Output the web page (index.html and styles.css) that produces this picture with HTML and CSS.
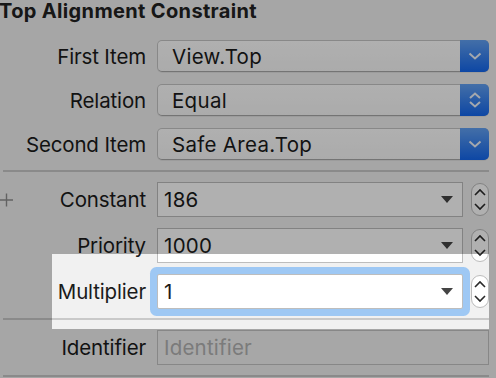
FILE: index.html
```html
<!DOCTYPE html>
<html>
<head>
<meta charset="utf-8">
<link rel="stylesheet" href="styles.css">
</head>
<body>
<div class="panel">
  <div class="title">Top Alignment Constraint</div>

  <div class="grid popups">
    <div class="label">First Item</div>
    <div class="popup">
      <div class="popup-value">View.Top</div>
      <div class="popup-btn">
        <svg width="14" height="8" viewBox="0 0 14 8"><path d="M1.5 1.5 L7 6.5 L12.5 1.5" fill="none" stroke="#eef3fb" stroke-width="2"/></svg>
      </div>
    </div>

    <div class="label">Relation</div>
    <div class="popup">
      <div class="popup-value">Equal</div>
      <div class="popup-btn">
        <svg width="14" height="18" viewBox="0 0 14 18"><path d="M2 7 L7 2.5 L12 7 M2 11 L7 15.5 L12 11" fill="none" stroke="#eef3fb" stroke-width="2"/></svg>
      </div>
    </div>

    <div class="label">Second Item</div>
    <div class="popup">
      <div class="popup-value">Safe Area.Top</div>
      <div class="popup-btn">
        <svg width="14" height="8" viewBox="0 0 14 8"><path d="M1.5 1.5 L7 6.5 L12.5 1.5" fill="none" stroke="#eef3fb" stroke-width="2"/></svg>
      </div>
    </div>
  </div>

  <div class="sep"></div>

  <div class="grid combos">
    <div class="label label-plus">
      <svg class="plus" width="14" height="14" viewBox="0 0 14 14"><path d="M0 7 H13 M6.5 0.5 V13.5" stroke="#8e8e8e" stroke-width="1.4" fill="none"/></svg>
      <span>Constant</span>
    </div>
    <div class="combo-row">
      <div class="combo"><span>186</span><i class="tri"></i></div>
      <div class="stepper">
        <svg width="18" height="33" viewBox="0 0 18 33"><path d="M4 12 L9 7 L14 12 M4 21 L9 26 L14 21" fill="none" stroke="#2a2a2a" stroke-width="1.6"/></svg>
      </div>
    </div>

    <div class="label">Priority</div>
    <div class="combo-row">
      <div class="combo"><span>1000</span><i class="tri"></i></div>
      <div class="stepper">
        <svg width="18" height="33" viewBox="0 0 18 33"><path d="M4 12 L9 7 L14 12 M4 21 L9 26 L14 21" fill="none" stroke="#2a2a2a" stroke-width="1.6"/></svg>
      </div>
    </div>

    <div class="label">Multiplier</div>
    <div class="combo-row">
      <div class="combo focused"><span>1</span><i class="tri"></i></div>
      <div class="stepper">
        <svg width="18" height="33" viewBox="0 0 18 33"><path d="M4 12 L9 7 L14 12 M4 21 L9 26 L14 21" fill="none" stroke="#2a2a2a" stroke-width="1.6"/></svg>
      </div>
    </div>
  </div>

  <div class="sep sep2"></div>

  <div class="grid ident">
    <div class="label">Identifier</div>
    <div class="field-disabled">Identifier</div>
  </div>

  <div class="sep sep3"></div>
</div>
<div class="spotlight"></div>
</body>
</html>
```

FILE: styles.css
```css
html, body {
  margin: 0;
  padding: 0;
}
body {
  width: 496px;
  height: 378px;
  overflow: hidden;
  background: #f1f1f1;
  font-family: "Inter", "Noto Sans", sans-serif;
  color: #1b1b1b;
  position: relative;
}
.panel {
  width: 489px;
}
.title {
  font-weight: 700;
  font-size: 20px;
  letter-spacing: 0.35px;
  line-height: 22px;
  height: 22px;
  margin-left: -1px;
  color: #222;
}
.grid {
  display: grid;
  grid-template-columns: 146px 1fr;
  column-gap: 11px;
}
.popups {
  margin-top: 18px;
  grid-auto-rows: 32px;
  row-gap: 12px;
}
.label {
  font-size: 20.5px;
  letter-spacing: -0.15px;
  display: flex;
  align-items: center;
  justify-content: flex-end;
  white-space: nowrap;
}
.label-plus {
  justify-content: space-between;
}
.plus {
  display: block;
}
.popup {
  display: flex;
  border: 1px solid #c6c6c6;
  border-bottom-color: #a9a9a9;
  border-radius: 5px;
  background: linear-gradient(#ffffff, #f8f8f8);
  box-shadow: 0 1px 0 rgba(0,0,0,0.06);
}
.popup-value {
  flex: 1;
  font-size: 20.5px;
  letter-spacing: 0.3px;
  padding-left: 14px;
  display: flex;
  align-items: center;
}
.popup-btn {
  width: 29px;
  margin: -1px -1px -1px 0;
  border-radius: 0 5px 5px 0;
  background: linear-gradient(#62a1f3, #1467ee);
  display: flex;
  align-items: center;
  justify-content: center;
}
.popup-btn svg {
  display: block;
}
.sep {
  height: 2px;
  background: #c9c9c9;
  margin-left: 3px;
  margin-top: 10px;
}
.combos {
  margin-top: 10px;
  grid-auto-rows: 35px;
  row-gap: 11px;
}
.combo-row {
  display: flex;
  align-items: center;
  gap: 8px;
}
.combo {
  flex: 1;
  height: 35px;
  box-sizing: border-box;
  border: 1px solid #bdbdbd;
  background: #fff;
  display: flex;
  align-items: center;
  justify-content: space-between;
  padding: 0 9px 0 6px;
  font-size: 20.5px;
  letter-spacing: 0.3px;
}
.combo.focused {
  border-radius: 2px;
  box-shadow: 0 0 0 7px #9ec8f4;
}
.tri {
  width: 0;
  height: 0;
  border-left: 6px solid transparent;
  border-right: 6px solid transparent;
  border-top: 7px solid #444;
}
.stepper {
  width: 18px;
  height: 33px;
  box-sizing: border-box;
  border: 1px solid #bcbcbc;
  border-radius: 9px;
  background: #fff;
  overflow: hidden;
}
.stepper svg {
  display: block;
  margin: -1px;
}
.sep2 {
  margin-top: 9px;
}
.ident {
  margin-top: 10px;
  grid-auto-rows: 35px;
}
.field-disabled {
  box-sizing: border-box;
  border: 1px solid #c4c4c4;
  background: #f2f2f2;
  color: #b3b3b3;
  font-size: 20.5px;
  letter-spacing: 0.2px;
  display: flex;
  align-items: center;
  padding-left: 6px;
}
.sep3 {
  margin-top: 10px;
}
.spotlight {
  position: absolute;
  left: 52px;
  top: 254px;
  width: 437px;
  height: 75px;
  box-shadow: 0 0 0 1200px rgba(0,0,0,0.31);
  pointer-events: none;
}
```
